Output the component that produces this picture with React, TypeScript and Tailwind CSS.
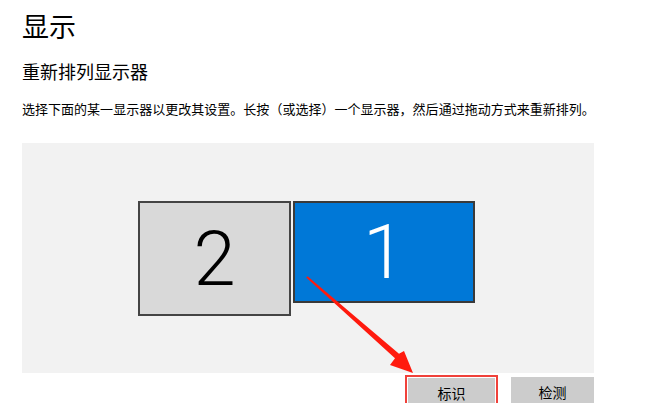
import React from 'react';

const font = { fontFamily: '"Noto Sans CJK SC", "Noto Sans", sans-serif' };

function Monitor({ num, active }: { num: string; active?: boolean }) {
  return (
    <div
      className={
        active
          ? 'w-[182px] h-[102px] bg-[#0078d7] border-2 border-[#3a3a3a] flex items-center justify-center text-white'
          : 'w-[153px] h-[115px] bg-[#d9d9d9] border-2 border-[#444] flex items-center justify-center text-black'
      }
    >
      <span className="text-[76px] leading-none font-light" style={{ fontFamily: 'Roboto, "Liberation Sans", sans-serif' }}>
        {num}
      </span>
    </div>
  );
}

export default function App() {
  return (
    <div className="relative w-[650px] h-[403px] overflow-hidden bg-white text-black" style={font}>
      <div className="pl-[22px]">
        <h1 className="text-[27px] leading-[36px] pt-[8px] font-normal">显示</h1>
        <h2 className="text-[18px] leading-[24px] mt-[15px] font-normal">重新排列显示器</h2>
        <p className="text-[13px] leading-[18px] mt-[17px] tracking-[0.02px]">
          选择下面的某一显示器以更改其设置。长按（或选择）一个显示器，然后通过拖动方式来重新排列。
        </p>

        {/* monitor arrangement */}
        <div className="mt-[25px] w-[572px] h-[230px] bg-[#f2f2f2] flex items-start gap-[2px] pl-[116px] pt-[58px]">
          <Monitor num="2" />
          <Monitor num="1" active />
        </div>

        <div className="flex mt-[2px] ml-[383px] gap-[13px]">
          <div className="border-2 border-[#f0413a] p-[1px]">
            <button className="w-[87px] h-[30px] bg-[#cccccc] text-[14px] leading-[30px]">标识</button>
          </div>
          <button className="w-[83px] h-[30px] mt-[2px] bg-[#cccccc] text-[14px] leading-[30px]">检测</button>
        </div>
      </div>

      {/* annotation arrow */}
      <svg className="absolute left-0 top-0 pointer-events-none" width="650" height="403" viewBox="0 0 650 403">
        <polygon
          points="306.2,277.6 307.6,276.2 399,353.8 404,351 413,373 390,365 395,358.2"
          fill="#ff1a0e"
        />
      </svg>
    </div>
  );
}
